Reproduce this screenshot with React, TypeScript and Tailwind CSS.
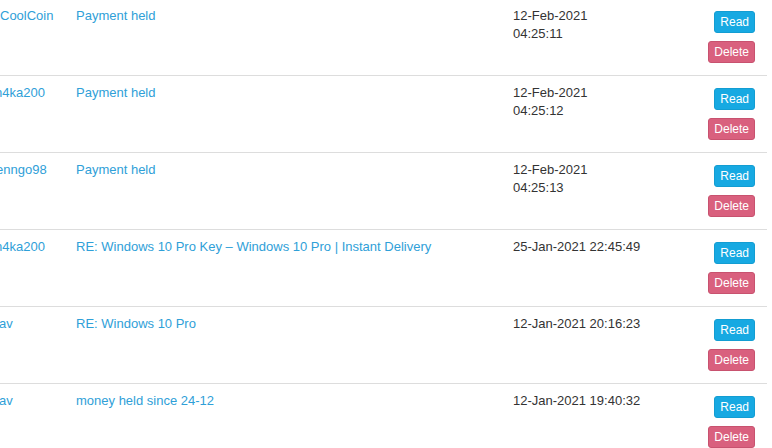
const rows = [
  { user: "CoolCoin", indent: "ml-[5px]", subject: "Payment held", date: ["12-Feb-2021", "04:25:11"] },
  { user: "n4ka200", indent: "", subject: "Payment held", date: ["12-Feb-2021", "04:25:12"] },
  { user: "enngo98", indent: "ml-[1px]", subject: "Payment held", date: ["12-Feb-2021", "04:25:13"] },
  { user: "n4ka200", indent: "", subject: "RE: Windows 10 Pro Key – Windows 10 Pro | Instant Delivery", date: ["25-Jan-2021 22:45:49"] },
  { user: "av", indent: "ml-[4px]", subject: "RE: Windows 10 Pro", date: ["12-Jan-2021 20:16:23"] },
  { user: "av", indent: "ml-[4px]", subject: "money held since 24-12", date: ["12-Jan-2021 19:40:32"] },
];

export default function App() {
  return (
    <div className="w-[772px] h-[448px] overflow-hidden bg-white text-[13px] leading-[18px] text-[#333] font-['Liberation_Sans',Arial,sans-serif]">
      <div className="-mt-px -ml-[13px] w-[780px]">
        {rows.map((r, i) => (
          <div key={i} className="flex border-b border-[#ddd]">
            <div className="w-[81px] shrink-0 p-2 whitespace-nowrap overflow-hidden">
              <a href="#" className={`text-[#2fa0d8] inline-block ${r.indent}`}>{r.user}</a>
            </div>
            <div className="w-[437px] shrink-0 p-2">
              <a href="#" className="text-[#2fa0d8]">{r.subject}</a>
            </div>
            <div className="flex-1 p-2">
              {r.date.map((d) => (
                <div key={d}>{d}</div>
              ))}
            </div>
            <div className="flex flex-col items-end py-2 pr-3 pl-2 text-[12px] leading-[18px]">
              <button className="my-1 px-[5px] py-px rounded-[3px] border border-[#139dd2] bg-[#17a9e2] text-white">Read</button>
              <button className="my-1 px-[5px] py-px rounded-[3px] border border-[#c8526f] bg-[#d9607e] text-white">Delete</button>
            </div>
          </div>
        ))}
      </div>
    </div>
  );
}
